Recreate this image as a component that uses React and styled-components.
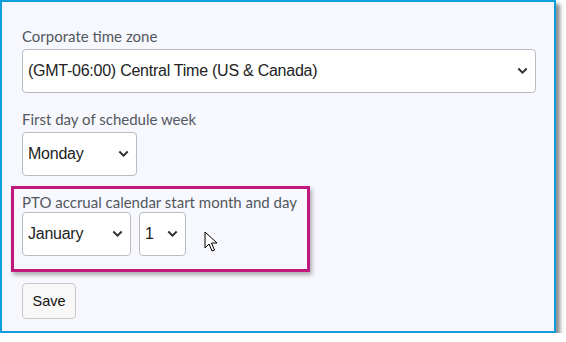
import React from "react";
import styled, { createGlobalStyle } from "styled-components";

const Global = createGlobalStyle`
  html, body {
    margin: 0;
    padding: 0;
    background: #ffffff;
  }
`;

const Frame = styled.div`
  box-sizing: border-box;
  width: 556px;
  height: 333px;
  border: 2px solid #109ddb;
  background: #f7f8fd;
  box-shadow: 4px 4px 4px rgba(0, 0, 0, 0.45);
  padding: 24px 20px 0 20px;
  display: flex;
  flex-direction: column;
`;

const Field = styled.div`
  display: flex;
  flex-direction: column;
  margin-bottom: ${(p) => p.$gap || 0}px;
`;

const Label = styled.label`
  font-family: Lato, "Open Sans", sans-serif;
  font-size: 15px;
  color: #52575e;
  line-height: 20px;
  margin-bottom: 3px;
`;

const Row = styled.div`
  display: flex;
  align-items: center;
  gap: 8px;
`;

const SelectBox = styled.div`
  box-sizing: border-box;
  position: relative;
  width: ${(p) => p.$w}px;
  height: 44px;
  background: #ffffff;
  border: 1px solid #b9bcc2;
  border-radius: 4px;
  display: flex;
  align-items: center;
  padding-left: 5px;
  font-family: "Liberation Sans", Arial, sans-serif;
  font-size: 16px;
  letter-spacing: -0.25px;
  color: #222;
`;

const Chevron = styled.svg`
  position: absolute;
  right: 7px;
  top: 50%;
  margin-top: -4px;
`;

const Highlight = styled.div`
  box-sizing: border-box;
  margin: 0 0 0 -11px;
  width: 299px;
  height: 86px;
  border: 3px solid #c0197e;
  padding: 3px 0 0 8px;
  box-shadow: 2px 3px 4px rgba(0, 0, 0, 0.3);
  position: relative;
`;

const Cursor = styled.svg`
  position: absolute;
  left: 190px;
  top: 42px;
`;

const Button = styled.button`
  box-sizing: border-box;
  align-self: flex-start;
  margin-top: 11px;
  width: 54px;
  height: 36px;
  padding: 0;
  background: #f8f8f8;
  border: 1px solid #c8c8c8;
  border-radius: 4px;
  font-family: "Liberation Sans", Arial, sans-serif;
  font-size: 14.5px;
  color: #111;
`;

const Select = ({ w, children }) => (
  <SelectBox $w={w}>
    {children}
    <Chevron width="11" height="8" viewBox="0 0 11 8">
      <path d="M1.3 1.5 L5.5 5.7 L9.7 1.5" fill="none" stroke="#333" strokeWidth="2" />
    </Chevron>
  </SelectBox>
);

export default function App() {
  return (
    <>
      <Global />
      <Frame>
        <Field $gap={16}>
          <Label>Corporate time zone</Label>
          <Select w={514}>(GMT-06:00) Central Time (US &amp; Canada)</Select>
        </Field>
        <Field $gap={10}>
          <Label>First day of schedule week</Label>
          <Select w={115}>Monday</Select>
        </Field>
        <Highlight>
          <Label>PTO accrual calendar start month and day</Label>
          <Row>
            <Select w={109}>January</Select>
            <Select w={47}>1</Select>
          </Row>
          <Cursor width="14" height="22" viewBox="0 0 14 22">
            <path
              d="M1 1 L1 17 L5 13 L8 20 L10.5 19 L7.5 12 L13 12 Z"
              fill="#fff"
              stroke="#000"
              strokeWidth="1"
              strokeLinejoin="round"
            />
          </Cursor>
        </Highlight>
        <Button>Save</Button>
      </Frame>
    </>
  );
}
